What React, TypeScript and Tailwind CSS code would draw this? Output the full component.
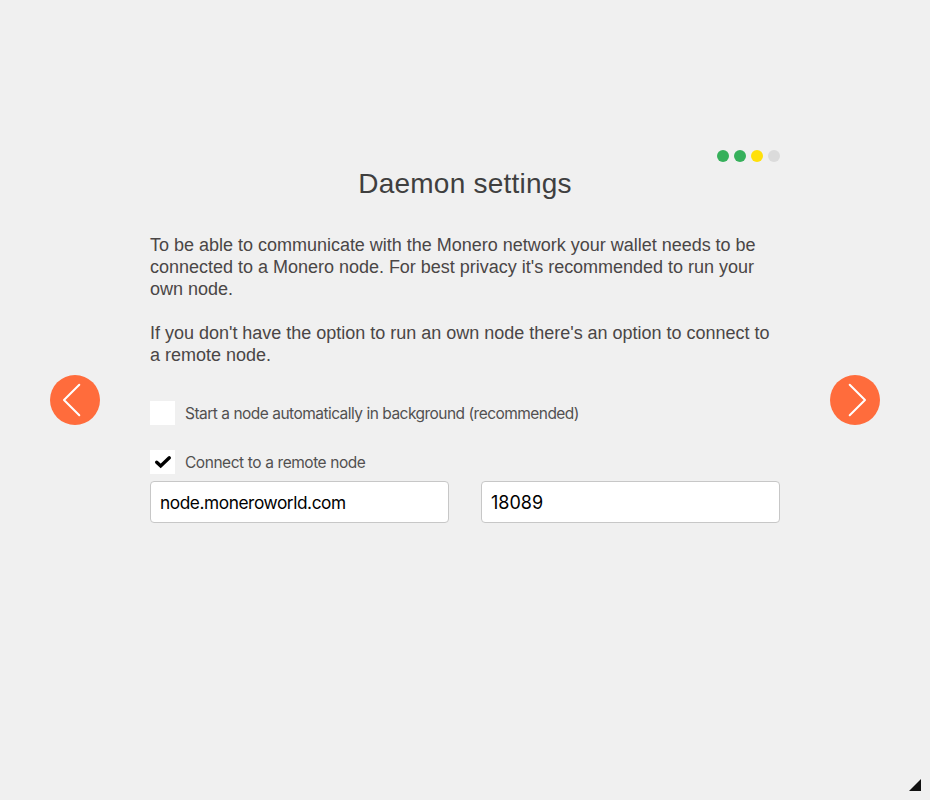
const stepColors = ["bg-[#36b05b]", "bg-[#36b05b]", "bg-[#ffe00a]", "bg-[#dbdbdb]"];

function NavButton({ label, points }: { label: string; points: string }) {
  return (
    <button aria-label={label} className="h-[50px] w-[50px] shrink-0 rounded-full bg-[#ff6c3c]">
      <svg width="50" height="50" viewBox="0 0 50 50" fill="none" stroke="#fff" strokeWidth="2" strokeLinecap="round" strokeLinejoin="round">
        <polyline points={points} />
      </svg>
    </button>
  );
}

function CheckRow({ text, checked, spacing }: { text: string; checked: boolean; spacing: string }) {
  return (
    <div className="flex h-6 items-center gap-[10px]">
      <span role="checkbox" aria-checked={checked} className="flex h-6 w-[25px] items-center justify-center bg-white">
        {checked && (
          <svg width="25" height="24" viewBox="0 0 25 24" fill="none" stroke="#000" strokeWidth="3.4" strokeLinecap="round" strokeLinejoin="miter">
            <path d="M6.7 12.2 10.7 16 19.3 7.8" />
          </svg>
        )}
      </span>
      <span className={`whitespace-nowrap pt-[2px] font-['Inter','Liberation_Sans',sans-serif] text-[15.5px] leading-6 text-[#525050] ${spacing}`}>{text}</span>
    </div>
  );
}

function Field({ value, spacing }: { value: string; spacing: string }) {
  return (
    <div className={`flex h-[42px] w-[299px] items-center rounded border border-[#c7c7c7] bg-white pl-[9px] font-['Inter','Liberation_Sans',sans-serif] text-black ${spacing}`}>
      {value}
    </div>
  );
}

export default function App() {
  return (
    <div className="relative flex h-[800px] w-[930px] justify-between bg-[#f0f0f0] px-[50px] font-['Liberation_Sans',Arial,sans-serif]">
      <div className="flex items-center">
        <NavButton label="Previous" points="29.3,9.7 14,25 29.3,40.3" />
      </div>
      <main className="w-[630px] pt-[150px]">
        <div className="flex h-3 justify-end gap-[5px]">
          {stepColors.map((color, i) => (
            <span key={i} className={`h-3 w-3 rounded-full ${color}`} />
          ))}
        </div>
        <h1 className="mt-[6px] text-center text-[28px] leading-8 tracking-[0.22px] text-[#3f3f3f]">Daemon settings</h1>
        <div className="mt-[34px] whitespace-nowrap text-[18px] leading-[22px] tracking-[-0.01px] text-[#4a4646]">
          <p>
            To be able to communicate with the Monero network your wallet needs to be
            <br />
            connected to a Monero node. For best privacy it's recommended to run your
            <br />
            own node.
          </p>
          <p className="mt-[22px]">
            If you don't have the option to run an own node there's an option to connect to
            <br />a remote node.
          </p>
        </div>
        <div className="mt-[35px] flex flex-col gap-[25px]">
          <CheckRow text="Start a node automatically in background (recommended)" checked={false} spacing="tracking-[-0.54px] [word-spacing:0.2px]" />
          <CheckRow text="Connect to a remote node" checked spacing="tracking-[-0.46px] [word-spacing:0.2px]" />
        </div>
        <div className="mt-[7px] flex justify-between">
          <Field value="node.moneroworld.com" spacing="pt-[2px] text-[17.3px] tracking-[-0.43px]" />
          <Field value="18089" spacing="text-[18px]" />
        </div>
      </main>
      <div className="flex items-center">
        <NavButton label="Next" points="19.7,9.7 35,25 19.7,40.3" />
      </div>
      <svg className="absolute right-[9px] bottom-[9px]" width="12" height="12" viewBox="0 0 12 12">
        <path d="M12 0V12H0Z" fill="#111" />
      </svg>
    </div>
  );
}
